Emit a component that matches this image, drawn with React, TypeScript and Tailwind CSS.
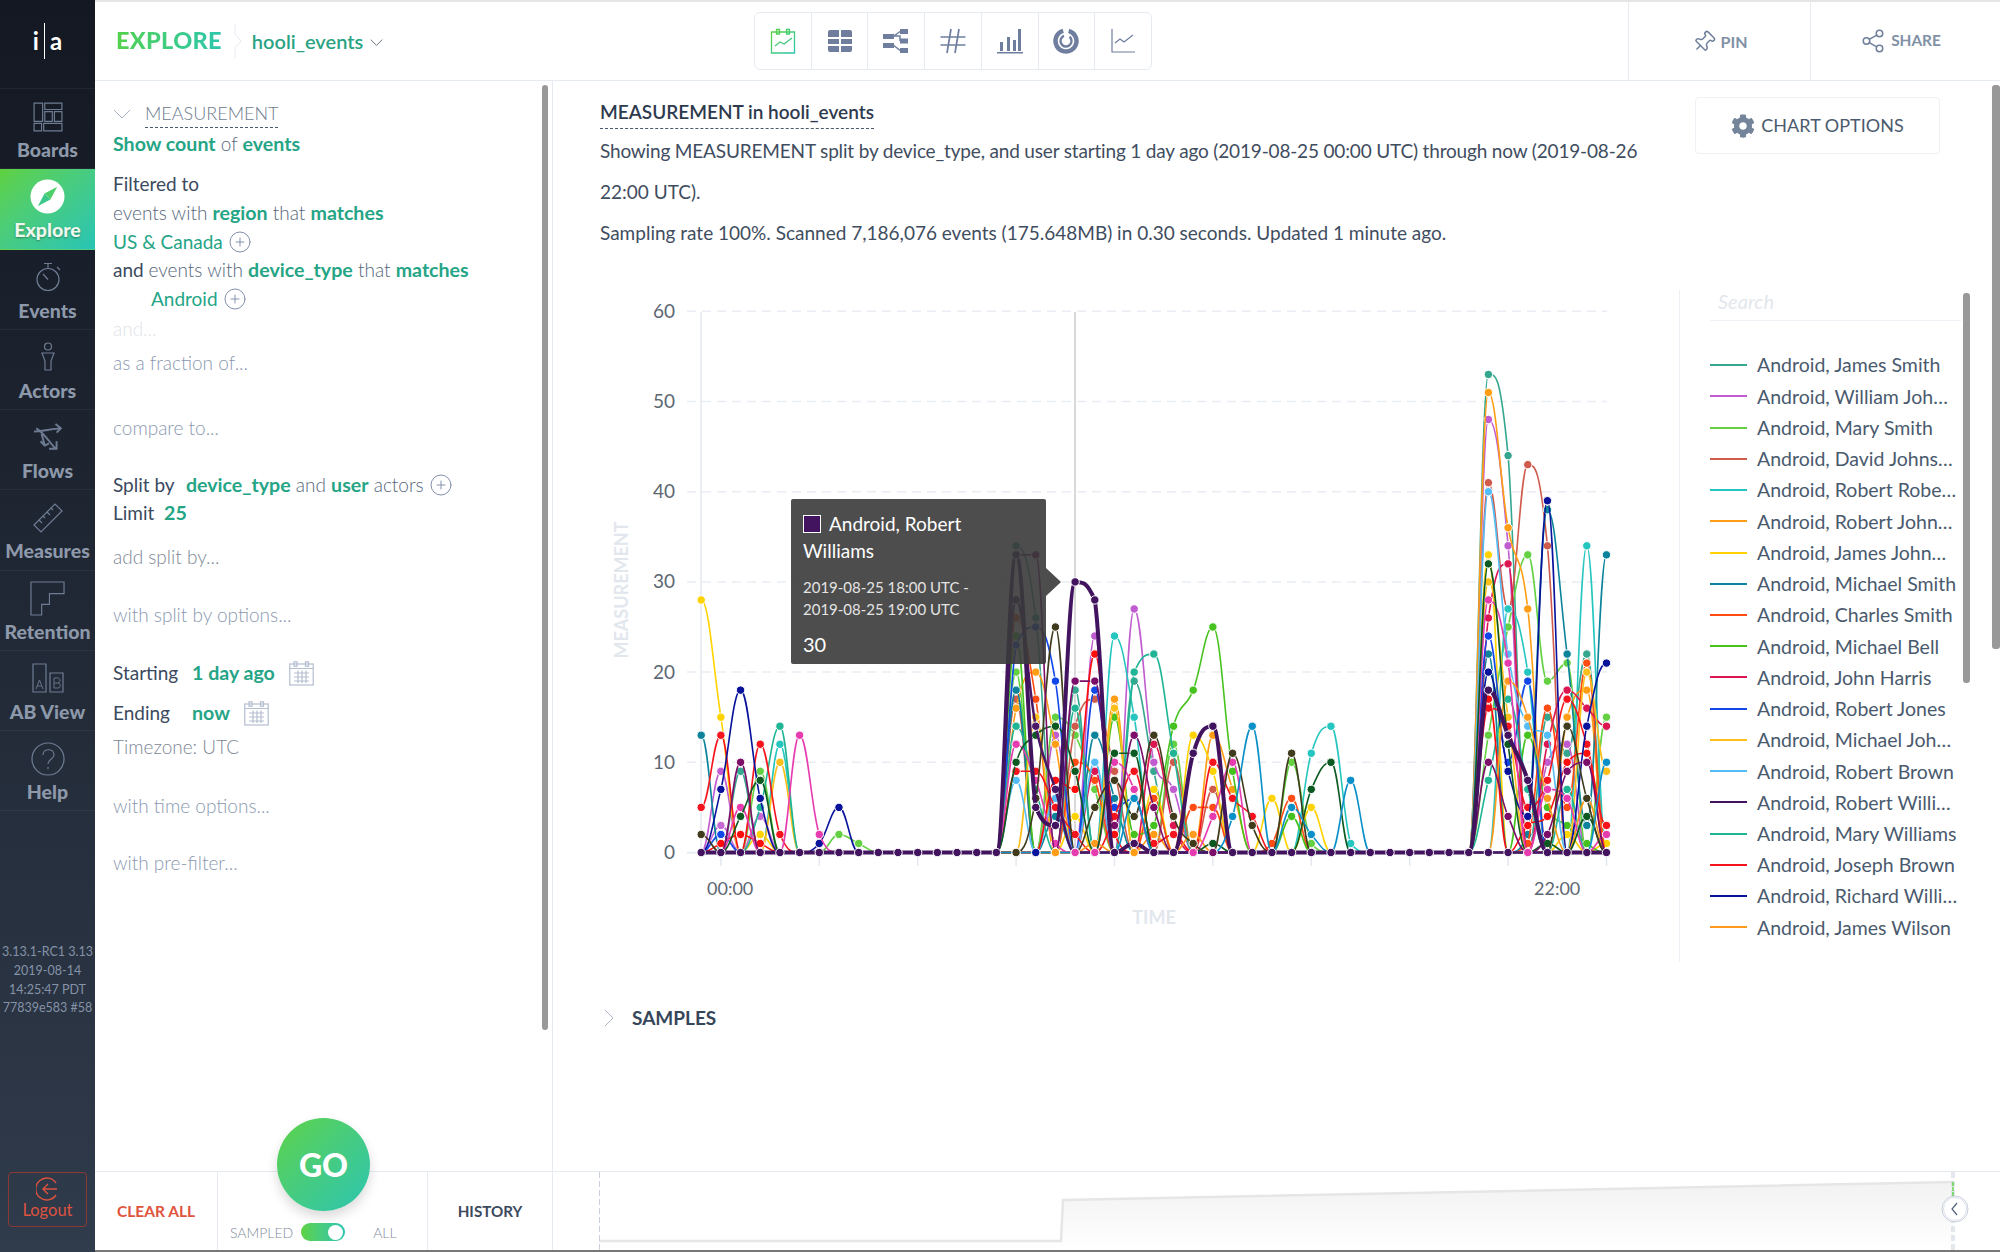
import { ReactNode } from "react";
import { CirclePlus, Pin, Share2 } from "lucide-react";
import { FaCog } from "react-icons/fa";

type Series = { color: string; width?: number; values: Record<number, number> };

const series: Series[] = [
  { color: "#35a78e", values: { 2: 9, 16: 34, 17: 26, 19: 18, 22: 19, 23: 9, 40: 53, 41: 44, 43: 15, 44: 11, 45: 22 } },
  { color: "#c05bd0", values: { 1: 9, 18: 13, 20: 24, 22: 27, 23: 10, 24: 7, 40: 48, 41: 34, 43: 10, 44: 12 } },
  { color: "#c86ad4", values: { 1: 3, 3: 4 } },
  { color: "#64d143", values: { 3: 9, 7: 2, 8: 1, 16: 20, 18: 15, 19: 13, 20: 7, 24: 12, 30: 10, 31: 1, 40: 13, 41: 25, 42: 33, 43: 19, 44: 21, 46: 15 } },
  { color: "#cf5b4c", values: { 16: 17, 19: 14, 20: 17, 21: 9, 24: 10, 26: 7, 40: 41, 41: 27, 42: 43, 43: 34 } },
  { color: "#26c6c0", values: { 4: 12, 21: 24, 22: 15, 31: 11, 32: 14, 33: 1, 41: 27, 42: 20, 45: 34 } },
  { color: "#ff9e14", values: { 16: 16, 17: 20, 18: 12, 21: 17, 23: 2, 26: 13, 27: 7, 40: 51, 41: 36, 42: 27, 44: 15, 45: 18 } },
  { color: "#ffd300", values: { 0: 28, 1: 15, 3: 2, 19: 4, 23: 7, 25: 13, 26: 9, 29: 6, 31: 5, 40: 33, 44: 2, 46: 1 } },
  { color: "#0a839b", values: { 0: 13, 16: 18, 18: 4, 20: 13, 21: 6, 40: 22, 42: 2, 43: 38, 44: 22, 45: 3, 46: 33 } },
  { color: "#ff4b14", values: { 16: 26, 17: 17, 19: 10, 20: 8, 23: 6, 25: 5, 26: 5, 29: 1, 30: 6, 42: 1, 43: 16, 44: 5, 45: 21 } },
  { color: "#46c21e", values: { 16: 24, 21: 15, 22: 2, 23: 3, 24: 14, 25: 18, 26: 25, 27: 9, 30: 4, 42: 13, 43: 5, 44: 3, 45: 1 } },
  { color: "#dc1650", values: { 20: 9, 23: 12, 24: 3, 40: 26, 41: 32, 43: 12, 44: 18, 45: 16, 46: 14 } },
  { color: "#1248ea", values: { 1: 2, 16: 23, 17: 25, 18: 19, 20: 18, 21: 5, 22: 6, 40: 24, 41: 10, 42: 19 } },
  { color: "#ffbf1a", values: { 4: 10, 17: 15, 21: 16, 40: 30, 41: 15, 45: 20, 46: 9 } },
  { color: "#55bdf5", values: { 16: 8, 18: 6, 20: 10, 40: 40, 41: 22, 42: 14, 43: 13 } },
  { color: "#1fb594", values: { 3: 5, 4: 14, 16: 14, 17: 7, 19: 16, 22: 20, 23: 22, 24: 11, 40: 8, 41: 17, 42: 7, 44: 7 } },
  { color: "#f5141e", values: { 0: 5, 1: 13, 3: 12, 4: 2, 16: 9, 17: 9, 18: 5, 19: 2, 21: 4, 22: 9, 23: 1, 24: 2, 26: 10, 27: 6, 28: 4, 40: 16, 41: 14, 42: 5, 43: 8, 44: 17, 45: 12, 46: 3 } },
  { color: "#ff0d0d", values: { 1: 1, 2: 2, 3: 1, 18: 8, 19: 7, 20: 22, 21: 2, 40: 17, 42: 3, 43: 4, 44: 10, 45: 11 } },
  { color: "#08129a", values: { 1: 7, 2: 18, 3: 6, 6: 1, 7: 5, 40: 20, 41: 9, 42: 4, 43: 39, 45: 14, 46: 21 } },
  { color: "#ff9a1c", values: { 20: 1, 25: 2, 41: 19, 42: 15, 43: 6, 45: 6 } },
  { color: "#e63cb0", values: { 2: 5, 5: 13, 6: 2, 16: 12, 17: 8, 18: 1, 21: 10, 22: 7, 26: 4, 27: 10, 40: 28, 41: 21, 43: 7, 44: 6, 46: 2 } },
  { color: "#0c5a22", values: { 2: 4, 3: 8, 16: 10, 17: 13, 18: 14, 19: 9, 21: 11, 22: 11, 26: 1, 31: 7, 32: 10, 40: 32, 41: 12, 43: 1, 45: 4 } },
  { color: "#3f3b1c", values: { 0: 2, 17: 6, 18: 25, 20: 5, 21: 8, 22: 4, 23: 13, 24: 4, 25: 1, 27: 11, 28: 3, 30: 11, 44: 14, 45: 6 } },
  { color: "#7a0e68", values: { 2: 10, 16: 33, 17: 33, 19: 19, 20: 19, 21: 3, 22: 13, 23: 5, 40: 10, 41: 4, 43: 2, 44: 9, 45: 10 } },
  { color: "#0a90c8", values: { 22: 6, 27: 4, 28: 14, 30: 5, 31: 2, 33: 8, 46: 10 } },
  { color: "#4a1668", width: 2.5, values: { 16: 28, 17: 14, 18: 7 } },
  { color: "#42145f", width: 4, values: { 16: 33, 17: 5, 18: 3, 19: 30, 20: 28, 22: 1, 25: 11, 26: 14, 40: 18, 41: 13, 42: 8 } },
];

// dots that sit on top of the purple line along zero
const zeroDots: [number, string][] = [
  [16, "#3f3b1c"], [17, "#08129a"], [18, "#ff9e14"], [19, "#e63cb0"], [20, "#e63cb0"], [22, "#ff9e14"],
  [25, "#e63cb0"], [26, "#7a0e68"], [42, "#e63cb0"],
];

const legend: [string, string][] = [
  ["Android, James Smith", "#35a78e"],
  ["Android, William Joh…", "#c05bd0"],
  ["Android, Mary Smith", "#64d143"],
  ["Android, David Johns…", "#cf5b4c"],
  ["Android, Robert Robe…", "#26c6c0"],
  ["Android, Robert John…", "#ff9e14"],
  ["Android, James John…", "#ffd300"],
  ["Android, Michael Smith", "#0a839b"],
  ["Android, Charles Smith", "#ff4b14"],
  ["Android, Michael Bell", "#46c21e"],
  ["Android, John Harris", "#dc1650"],
  ["Android, Robert Jones", "#1248ea"],
  ["Android, Michael Joh…", "#ffbf1a"],
  ["Android, Robert Brown", "#55bdf5"],
  ["Android, Robert Willi…", "#42145f"],
  ["Android, Mary Williams", "#1fb594"],
  ["Android, Joseph Brown", "#f5141e"],
  ["Android, Richard Willi…", "#08129a"],
  ["Android, James Wilson", "#ff9a1c"],
];

const X0 = 701.2;
const DX = 19.68;
const Y0 = 852.5;
const UNIT = 9.02;
const sx = (i: number) => X0 + i * DX;
const sy = (v: number) => Y0 - v * UNIT;

function splinePath(values: Record<number, number>) {
  const ys = Array.from({ length: 47 }, (_, i) => sy(values[i] ?? 0));
  const slope = (i: number) => {
    if (i === 0 || i === 46) return 0;
    if ((ys[i] - ys[i - 1]) * (ys[i + 1] - ys[i]) <= 0) return 0;
    return (ys[i + 1] - ys[i - 1]) / (2 * DX);
  };
  const clamp = (v: number, a: number, b: number) => Math.min(Math.max(v, Math.min(a, b)), Math.max(a, b));
  let d = `M${sx(0)} ${ys[0]}`;
  const c = DX * 0.4;
  for (let i = 0; i < 46; i++) {
    const c1 = clamp(ys[i] + slope(i) * c, ys[i], ys[i + 1]);
    const c2 = clamp(ys[i + 1] - slope(i + 1) * c, ys[i], ys[i + 1]);
    d += `C${(sx(i) + c).toFixed(1)} ${c1.toFixed(1)} ${(sx(i + 1) - c).toFixed(1)} ${c2.toFixed(1)} ${sx(i + 1).toFixed(1)} ${ys[i + 1].toFixed(1)}`;
  }
  return d;
}

function Chart() {
  return (
    <svg viewBox="610 290 1069 672" className="h-[672px] w-[1069px] shrink-0">
      {[0, 10, 20, 30, 40, 50, 60].map((v) => (
        <g key={v}>
          <line x1={687} x2={1607} y1={sy(v)} y2={sy(v)} stroke="#e9edf3" strokeWidth={1.5} strokeDasharray="9 6" />
          <text x={675} y={sy(v) + 6.5} textAnchor="end" fontSize={19} fill="#5d6772">
            {v}
          </text>
        </g>
      ))}
      <line x1={701} x2={701} y1={312} y2={852} stroke="#e3e8ef" strokeWidth={1.5} />
      <line x1={687} x2={1607} y1={853} y2={853} stroke="#e3e8ef" strokeWidth={1} />
      {[1, 6, 11, 16, 21, 26, 31, 36, 41, 46].map((i) => (
        <line key={i} x1={sx(i)} x2={sx(i)} y1={853} y2={866} stroke="#e3e8ef" strokeWidth={1.5} />
      ))}
      <text x={707} y={895} fontSize={18} fill="#5d6772">00:00</text>
      <text x={1534} y={895} fontSize={18} fill="#5d6772">22:00</text>
      <text x={1154} y={924} textAnchor="middle" fontSize={18} fontWeight={700} fill="#e2e7ee">TIME</text>
      <text x={0} y={0} transform="translate(628 590) rotate(-90)" textAnchor="middle" fontSize={18} fontWeight={700} fill="#e2e7ee">
        MEASUREMENT
      </text>
      <line x1={1075} x2={1075} y1={312} y2={852} stroke="#cccccc" strokeWidth={1.5} />
      {series.map((s, n) => (
        <g key={n}>
          <path d={splinePath(s.values)} fill="none" stroke={s.color} strokeWidth={s.width ?? 1.6} />
          {Object.entries(s.values).map(([i, v]) => (
            <circle key={i} cx={sx(Number(i))} cy={sy(v)} r={4.2} fill={s.color} stroke="#fff" strokeWidth={1} />
          ))}
        </g>
      ))}
      {Array.from({ length: 47 }, (_, i) => (
        <circle key={i} cx={sx(i)} cy={sy(0)} r={4.2} fill="#42145f" stroke="#fff" strokeWidth={1} />
      ))}
      {zeroDots.map(([i, c]) => (
        <circle key={i} cx={sx(i)} cy={sy(0)} r={4.2} fill={c} stroke="#fff" strokeWidth={1} />
      ))}
    </svg>
  );
}

function Chevron({ dir, className }: { dir: "down" | "right" | "left"; className?: string }) {
  const d = dir === "down" ? "M1 5 L9 13 L17 5" : dir === "right" ? "M5 1 L13 9 L5 17" : "M13 1 L5 9 L13 17";
  return (
    <svg viewBox="0 0 18 18" fill="none" stroke="currentColor" strokeWidth={1} className={className}>
      <path d={d} />
    </svg>
  );
}

function Plus() {
  return <CirclePlus size={24} strokeWidth={1} className="ml-[5px] inline-block text-[#8491ad]" />;
}

function Calendar() {
  return (
    <svg viewBox="0 0 25 25" fill="none" stroke="#b4bed0" strokeWidth={1.2} className="h-[25px] w-[25px]">
      <rect x="0.8" y="3" width="23.4" height="21" />
      <rect x="5" y="0.8" width="3" height="4.5" />
      <rect x="16.5" y="0.8" width="3" height="4.5" />
      <path d="M0.8 7.5 H24.2 M5 12 H20 M5 16 H20 M5 20 H20 M9 9.5 V22 M13 9.5 V22 M17 9.5 V22" />
    </svg>
  );
}

const sideIcon = "h-[30px] w-[34px] text-[#6e7c93]";

const sideItems: { label: string; icon: ReactNode }[] = [
  {
    label: "Boards",
    icon: (
      <svg viewBox="0 0 28 28" fill="none" stroke="currentColor" strokeWidth={1.1} className={sideIcon}>
        <path d="M1 1 H9 V18 H1 Z M11 1 H27 V7 H11 Z M11 9 H18 V18 H11 Z M20 9 H27 V18 H20 Z M1 20 H8 V27 H1 Z M10 20 H27 V27 H10 Z" />
      </svg>
    ),
  },
  {
    label: "Explore",
    icon: (
      <svg viewBox="0 0 36 36" className="h-[35px] w-[35px]">
        <circle cx="18" cy="18" r="17.5" fill="#fff" />
        <path d="M28 8 L21 21 L15 15 Z" fill="#4fcf6a" />
        <path d="M8 28 L15 15 L21 21 Z" fill="#3cc88a" />
      </svg>
    ),
  },
  {
    label: "Events",
    icon: (
      <svg viewBox="0 0 26 30" fill="none" stroke="currentColor" strokeWidth={1.2} className={sideIcon}>
        <circle cx="13" cy="17.5" r="11" />
        <path d="M9 1.5 H17 M13 1.5 V6.5 M22 5 L25 8 M8 12 L13 17.5" />
      </svg>
    ),
  },
  {
    label: "Actors",
    icon: (
      <svg viewBox="0 0 26 30" fill="none" stroke="currentColor" strokeWidth={1.2} className={sideIcon}>
        <circle cx="13" cy="4.5" r="3.5" />
        <path d="M7 11 H19 L16 19 V28 H10 V19 Z" />
      </svg>
    ),
  },
  {
    label: "Flows",
    icon: (
      <svg viewBox="0 0 28 28" fill="none" stroke="currentColor" strokeWidth={1.8} className={sideIcon}>
        <path d="M1 8 C8 8 12 6 26 5 M21 1 L26 5 L22 9 M3 5 C9 8 14 16 21 24 M15 24 H22 V17 M8 10 L11 21 M7 17 L11 21 L15 19" />
      </svg>
    ),
  },
  {
    label: "Measures",
    icon: (
      <svg viewBox="0 0 30 30" fill="none" stroke="currentColor" strokeWidth={1.2} className={sideIcon}>
        <path d="M1 22 L22 1 L29 8 L8 29 Z M6 17 L9 20 M10 13 L12 15 M14 9 L17 12 M18 5 L20 7" />
      </svg>
    ),
  },
  {
    label: "Retention",
    icon: (
      <svg viewBox="0 0 36 36" fill="none" stroke="currentColor" strokeWidth={1.2} className="h-[35px] w-[35px] text-[#6e7c93]">
        <path d="M1 1 H35 V13 H20 V24 H12 V35 H1 Z" />
      </svg>
    ),
  },
  {
    label: "AB View",
    icon: (
      <svg viewBox="0 0 32 30" fill="none" stroke="currentColor" strokeWidth={1.2} className={sideIcon}>
        <path d="M1 1 H14 V29 H1 Z M18 10 H31 V29 H18 Z" />
        <path d="M4 26 L7.5 17 L11 26 M5.3 23 H9.7 M22 15 V25 H26 C29 25 29 20 26 20 H22 M26 20 C28.5 20 28.5 15 26 15 H22" strokeWidth={0.9} />
      </svg>
    ),
  },
  {
    label: "Help",
    icon: (
      <svg viewBox="0 0 34 34" fill="none" stroke="currentColor" strokeWidth={1.2} className="h-[34px] w-[34px] text-[#6e7c93]">
        <circle cx="17" cy="17" r="16" />
        <path d="M12 13 C12 6 23 6 23 13 C23 17 17 17 17 22 M17 25 V27" />
      </svg>
    ),
  },
];

function Sidebar() {
  return (
    <aside className="flex h-[1252px] w-[95px] shrink-0 flex-col bg-linear-to-b from-[#131822] to-[#303b4b]">
      <div className="flex h-[89px] items-center justify-center border-b border-white/5 pb-[6px]">
        <span className="text-[24px] font-bold text-white">i</span>
        <span className="mx-[5px] h-[36px] w-px bg-white" />
        <span className="text-[24px] font-bold text-white">a</span>
      </div>
      {sideItems.map((item) => {
        const active = item.label === "Explore";
        return (
          <div
            key={item.label}
            className={`flex h-[80.25px] flex-col items-center border-b border-white/5 pt-[9px] ${active ? "bg-linear-to-br from-[#5fd13c] to-[#27c4b4]" : ""}`}
          >
            <div className="flex h-[37px] items-center justify-center">{item.icon}</div>
            <div className={`text-[19.5px] leading-[30px] font-black ${active ? "text-[#eef8ee] [text-shadow:0_1px_2px_rgba(0,0,0,0.35)]" : "text-[#8d99aa]"}`}>
              {item.label}
            </div>
          </div>
        );
      })}
      <div className="mt-auto mb-[154px] text-center text-[12.5px] leading-[18.7px] whitespace-nowrap text-[#8593a8]">
        <div>3.13.1-RC1 3.13</div>
        <div>2019-08-14</div>
        <div>14:25:47 PDT</div>
        <div>77839e583 #58</div>
      </div>
      <div className="mx-[8px] mb-[25px] flex h-[55px] flex-col items-center justify-center rounded-[4px] border border-[#8a3a34] pb-[3px] text-[#de5340]">
        <svg viewBox="0 0 24 24" fill="none" stroke="currentColor" strokeWidth={1.4} className="h-[24px] w-[24px]">
          <path d="M20 6 A11 11 0 1 0 20 18 M21 12 H7 M12 7 L7 12 L12 17" />
        </svg>
        <div className="text-[16.5px] leading-[19px]">Logout</div>
      </div>
    </aside>
  );
}

const toolIcon = "h-[26px] w-[26px] text-[#6f7e9e]";

const tools: ReactNode[] = [
  <svg key="a" viewBox="0 0 26 26" fill="none" stroke="url(#calGrad)" strokeWidth={1.3} className="h-[26px] w-[26px]">
    <defs>
      <linearGradient id="calGrad" x1="0" y1="0" x2="1" y2="1">
        <stop offset="0" stopColor="#5cd23f" />
        <stop offset="1" stopColor="#2bc4b0" />
      </linearGradient>
    </defs>
    <path d="M1.5 4 H24.5 V25 H1.5 Z M6.5 1.5 H9.5 V6 H6.5 Z M16.5 1.5 H19.5 V6 H16.5 Z" />
    <path d="M5 18 L10 14 L14 16 L22 10" />
  </svg>,
  <svg key="b" viewBox="0 0 26 26" className={toolIcon} fill="currentColor">
    <path d="M1 4 a2 2 0 0 1 2-2 H12 V9 H1 Z M14 2 H23 a2 2 0 0 1 2 2 V9 H14 Z M1 11 H12 V16 H1 Z M14 11 H25 V16 H14 Z M1 18 H12 V24 H3 a2 2 0 0 1-2-2 Z M14 18 H25 V22 a2 2 0 0 1-2 2 H14 Z" />
  </svg>,
  <svg key="c" viewBox="0 0 26 26" className={toolIcon} fill="currentColor">
    <path d="M0 6 H11 V11 H0 Z M17 1 H25 V6 H17 Z M0 15 H11 V20 H0 Z M17 20 H25 V25 H17 Z M17 10.5 H25 V15.5 H17 Z" />
    <path d="M11 8 L17 3.5 M11 8 H17 V13 M11 17.5 L17 22.5" stroke="currentColor" strokeWidth={1.5} fill="none" />
  </svg>,
  <svg key="d" viewBox="0 0 26 26" className={toolIcon} fill="none" stroke="currentColor" strokeWidth={1.7}>
    <path d="M0.5 9 H25.5 M0.5 17 H25.5 M11 1 L7 25 M19 1 L15 25" />
  </svg>,
  <svg key="e" viewBox="0 0 26 26" className={toolIcon} fill="currentColor">
    <path d="M3 14 H6 V23 H3 Z M10 9 H13 V23 H10 Z M16 12 H19 V23 H16 Z M21 1 H24 V23 H21 Z M0 24 H26 V25.5 H0 Z" />
  </svg>,
  <svg key="f" viewBox="0 0 26 26" className={toolIcon} fill="none" stroke="currentColor">
    <circle cx="13" cy="13" r="10.5" strokeWidth={4.5} strokeDasharray="60 6" transform="rotate(-75 13 13)" />
    <circle cx="13" cy="13" r="5.5" strokeWidth={2.4} strokeDasharray="28 6.5" transform="rotate(-50 13 13)" />
  </svg>,
  <svg key="g" viewBox="0 0 26 26" className={toolIcon} fill="none" stroke="currentColor" strokeWidth={1.2}>
    <path d="M2 1 V24 H25 M5 15 L10 11 L14 14 L23 7" />
  </svg>,
];

function Header() {
  return (
    <header className="flex h-[79px] items-center border-b border-[#e6ebf2]">
      <div className="flex h-full w-[659px] shrink-0 items-center pl-[21px]">
        <span className="bg-linear-to-r from-[#52d147] to-[#2cc6ac] bg-clip-text text-[23.5px] font-black tracking-[0.3px] text-transparent">
          EXPLORE
        </span>
        <svg viewBox="0 0 8 34" fill="none" stroke="#e6ebf2" className="ml-[12px] h-[34px] w-[8px]">
          <path d="M1 0 V10 L7 17 L1 24 V34" />
        </svg>
        <span className="ml-[10px] text-[20px] font-semibold text-[#2aa384]">hooli_events</span>
        <Chevron dir="down" className="mt-[3px] ml-[7px] h-[13px] w-[13px] text-[#2f3d50]" />
      </div>
      <div className="flex h-[58px] w-[398px] shrink-0 divide-x divide-[#e6ebf2] rounded-[6px] border border-[#e6ebf2]">
        {tools.map((t, i) => (
          <div key={i} className="flex flex-1 items-center justify-center">
            {t}
          </div>
        ))}
      </div>
      <div className="flex-1" />
      <div className="flex h-full w-[182px] items-center justify-center gap-[5px] border-l border-[#e6ebf2] pt-[2px] text-[#8191a6]">
        <Pin size={24} strokeWidth={1.5} className="rotate-45 text-[#70809b]" />
        <span className="text-[16px] font-bold">PIN</span>
      </div>
      <div className="flex h-full w-[190px] items-center justify-center gap-[5px] border-l border-[#e6ebf2] pr-[10px] text-[#8191a6]">
        <Share2 size={26} strokeWidth={1.4} className="text-[#70809b]" />
        <span className="text-[15.4px] font-bold">SHARE</span>
      </div>
    </header>
  );
}

const g = "text-[19.6px] font-bold text-[#25a586]";
const l = "font-light text-[#56667a]";

function Row({ mt, className, children }: { mt: number; className?: string; children: ReactNode }) {
  return (
    <div style={{ marginTop: mt }} className={`flex h-[28px] items-center whitespace-pre ${className ?? ""}`}>
      {children}
    </div>
  );
}

function QueryPanel() {
  return (
    <div className="relative h-[1090px] w-[458px] shrink-0 border-r border-[#e6ebf2] pt-[19px] pl-[18px] text-[19px] text-[#3b4a5e]">
      <Row mt={0} className="font-light">
        <Chevron dir="down" className="h-[18px] w-[18px] text-[#a9b4c6]" />
        <span className="ml-[14px] border-b border-dashed border-[#4b596c] text-[18px] text-[#6d7b8e]">MEASUREMENT</span>
      </Row>
      <Row mt={2}>
        <span className={g}>Show count</span>
        <span className={l}> of </span>
        <span className={g}>events</span>
      </Row>
      <Row mt={12}>Filtered to</Row>
      <Row mt={1}>
        <span className={l}>events with </span>
        <span className={g}>region</span>
        <span className={l}> that </span>
        <span className={g}>matches</span>
      </Row>
      <Row mt={1}>
        <span className="text-[#25a586]">US &amp; Canada</span>
        <Plus />
      </Row>
      <Row mt={0}>
        <span>and </span>
        <span className={l}>events with </span>
        <span className={g}>device_type</span>
        <span className={l}> that </span>
        <span className={g}>matches</span>
      </Row>
      <Row mt={1} className="pl-[38px]">
        <span className="text-[#25a586]">Android</span>
        <Plus />
      </Row>
      <Row mt={2} className="font-light text-[#dfe3e9]">and...</Row>
      <Row mt={6} className="font-light text-[#8a99b0]">as a fraction of...</Row>
      <Row mt={37} className="font-light text-[#8a99b0]">compare to...</Row>
      <Row mt={29}>
        <span className="mr-[2px]">Split by  </span>
        <span className={g}>device_type</span>
        <span className={l}> and </span>
        <span className={g}>user</span>
        <span className={l}> actors</span>
        <Plus />
      </Row>
      <Row mt={0}>
        <span>Limit  </span>
        <span className={g}>25</span>
      </Row>
      <Row mt={16} className="font-light text-[#7d8794]">add split by...</Row>
      <Row mt={30} className="font-light text-[#8a99b0]">with split by options...</Row>
      <Row mt={30}>
        <span className="w-[79px]">Starting</span>
        <span className={g}>1 day ago</span>
        <span className="ml-[14px]"><Calendar /></span>
      </Row>
      <Row mt={12}>
        <span className="w-[79px]">Ending</span>
        <span className={g}>now</span>
        <span className="ml-[14px]"><Calendar /></span>
      </Row>
      <Row mt={6} className="font-light text-[#7d8794]">Timezone: UTC</Row>
      <Row mt={31} className="font-light text-[#8a99b0]">with time options...</Row>
      <Row mt={29} className="font-light text-[#8a99b0]">with pre-filter...</Row>
      <div className="absolute top-[4px] right-[4px] h-[945px] w-[6px] rounded-[3px] bg-[#999999]" />
    </div>
  );
}

function Tooltip() {
  return (
    <div className="absolute top-[209px] left-[181px] h-[165px] w-[255px] rounded-[2px] bg-[#3a3a3a]/90 px-[12px] pt-[11px] text-white">
      <div className="text-[19px] leading-[27px]">
        <span className="mr-[8px] inline-block h-[18px] w-[18px] border border-white bg-[#42145f] align-[-2px]" />
        Android, Robert Williams
      </div>
      <div className="mt-[12px] text-[15px] leading-[22px] text-[#e4e4e4]">
        2019-08-25 18:00 UTC -<br />2019-08-25 19:00 UTC
      </div>
      <div className="mt-[11px] text-[20px] leading-[26px]">30</div>
      <div className="absolute top-[69px] left-[255px] h-0 w-0 border-y-[14px] border-l-[15px] border-y-transparent border-l-[#3a3a3a]/90" />
    </div>
  );
}

function Legend() {
  return (
    <div className="relative h-[672px] w-[291px] shrink-0 border-l border-[#eceff3] pl-[30px]">
      <div className="h-[31px] w-[251px] border-b border-[#eef1f5] pl-[8px] text-[20px] leading-[23px] text-[#e3e7ec] italic">Search</div>
      <div className="mt-[28.5px] flex flex-col">
        {legend.map(([name, color]) => (
          <div key={name} className="flex h-[31.24px] items-center">
            <span style={{ backgroundColor: color }} className="h-[2px] w-[37px] shrink-0" />
            <span className="ml-[10px] text-[19.5px] whitespace-nowrap text-[#4a5a6e]">{name}</span>
          </div>
        ))}
      </div>
      <div className="absolute top-[3px] right-[0px] h-[390px] w-[7px] rounded-[3px] bg-[#999999]" />
    </div>
  );
}

function MainPanel() {
  return (
    <main className="relative h-[1090px] flex-1 pl-[47px]">
      <div className="flex">
        <div className="w-[1095px] shrink-0 pt-[17px] text-[19px] text-[#3f4d60]">
          <div className="inline-block border-b border-dashed border-[#4b596c] pb-[3px] text-[19px] leading-[26px] font-semibold text-[#2e3a4e]">
            MEASUREMENT in hooli_events
          </div>
          <div className="mt-[1px] leading-[41px]">
            <span className="tracking-[-0.17px]">
              Showing MEASUREMENT split by device_type, and user starting 1 day ago (2019-08-25 00:00 UTC) through now (2019-08-26
            </span>
            <br />
            22:00 UTC).
            <br />
            Sampling rate 100%. Scanned 7,186,076 events (175.648MB) in 0.30 seconds. Updated 1 minute ago.
          </div>
        </div>
        <div className="mt-[16px] flex h-[57px] w-[245px] items-center justify-center gap-[6px] rounded-[4px] border border-[#eef1f5] text-[18px] text-[#4b5a6e]">
          <FaCog size={24} className="text-[#74849a]" />
          CHART OPTIONS
        </div>
      </div>
      <div className="relative mt-[37px] ml-[10px] flex">
        <Chart />
        <Tooltip />
        <Legend />
      </div>
      <div className="mt-[44px] flex h-[24px] items-center">
        <Chevron dir="right" className="h-[18px] w-[18px] text-[#aab4c4]" />
        <span className="ml-[14px] text-[19px] font-bold text-[#364659]">SAMPLES</span>
      </div>
      <div className="absolute top-[4px] right-0 h-[564px] w-[8px] rounded-[3px] bg-[#999999]" />
    </main>
  );
}

function Timeline() {
  return (
    <svg viewBox="553 1171 1447 79" className="h-[79px] flex-1">
      <defs>
        <linearGradient id="tlFill" x1="0" y1="0" x2="0" y2="1">
          <stop offset="0" stopColor="#f2f2f2" />
          <stop offset="1" stopColor="#ffffff" />
        </linearGradient>
      </defs>
      <path d="M599 1240 H1061 L1063 1199 L1953 1181 V1250 H599 Z" fill="url(#tlFill)" />
      <path d="M599 1240 H1061 L1063 1199 L1953 1181" fill="none" stroke="#e6e6e6" strokeWidth={2.5} />
      <line x1={599.5} x2={599.5} y1={1171} y2={1250} stroke="#c9d0dc" strokeWidth={1} strokeDasharray="6 3" />
      <line x1={1952} x2={1952} y1={1171} y2={1250} stroke="#c9d0dc" strokeWidth={1} strokeDasharray="6 3" />
      <line x1={1954} x2={1954} y1={1171} y2={1250} stroke="#c9d0dc" strokeWidth={1} strokeDasharray="6 3" />
      <line x1={1953} x2={1953} y1={1181} y2={1197} stroke="#62d24a" strokeWidth={1.5} strokeDasharray="4 1" />
      <circle cx={1955} cy={1208} r={13} fill="#fff" stroke="#c9d0dc" strokeWidth={1} />
      <circle cx={1955} cy={1208} r={11.5} fill="#fff" stroke="#dde2ea" strokeWidth={1} />
      <path d="M1957 1202 L1952 1208 L1957 1214" fill="none" stroke="#52627c" strokeWidth={1.2} />
    </svg>
  );
}

function BottomBar() {
  return (
    <div className="flex h-[79px] border-t border-[#e6ebf2]">
      <div className="flex w-[458px] shrink-0 border-r border-[#e6ebf2]">
        <div className="flex w-[123px] items-center justify-center border-r border-[#e6ebf2] pt-[2px] text-[15.5px] font-bold text-[#e0533d]">
          CLEAR ALL
        </div>
        <div className="relative flex w-[210px] items-end border-r border-[#e6ebf2] pb-[7px] pl-[12px] text-[14px] font-light text-[#7f8a97]">
          <div className="absolute top-[-54px] left-[59px] flex h-[93px] w-[93px] items-center justify-center rounded-full bg-linear-to-br from-[#5dd23f] to-[#2ac4ae] text-[32px] font-black text-white shadow-[0_6px_12px_rgba(0,0,0,0.15)]">
            GO
          </div>
          <span className="leading-[20px]">SAMPLED</span>
          <div className="relative mb-[2px] ml-[8px] h-[18px] w-[44px] rounded-full bg-linear-to-r from-[#5dd23f] to-[#2ac4ae]">
            <div className="absolute top-[1.5px] right-[2px] h-[15px] w-[15px] rounded-full bg-white" />
          </div>
          <span className="ml-[28px] leading-[20px]">ALL</span>
        </div>
        <div className="flex flex-1 items-center justify-center pt-[1px] text-[15.2px] font-bold text-[#3d4a5e]">HISTORY</div>
      </div>
      <Timeline />
    </div>
  );
}

export default function App() {
  return (
    <div className="flex h-[1252px] w-[2000px] overflow-hidden bg-white font-['Lato',sans-serif]">
      <Sidebar />
      <div className="flex w-[1905px] flex-col">
        <div className="h-[2px] bg-[#e5e5e5]" />
        <Header />
        <div className="flex">
          <QueryPanel />
          <MainPanel />
        </div>
        <BottomBar />
        <div className="h-[2px] bg-[#777777]" />
      </div>
    </div>
  );
}
